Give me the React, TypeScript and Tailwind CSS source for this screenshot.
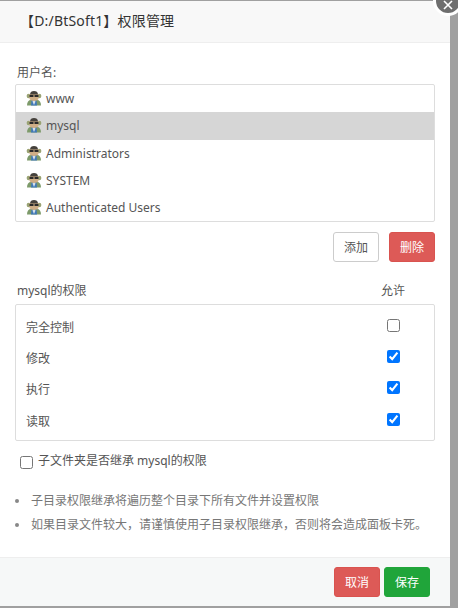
const FONT = "font-['Noto_Sans','Noto_Sans_CJK_SC',sans-serif]";

function UserIcon() {
  return (
    <svg width="16" height="16" viewBox="0 0 16 16" className="shrink-0">
      <path d="M1 15.500c0-3.500 1.500-5.500 4-5.500h6c2.500 0 4 2 4 5.500z" fill="#7d9a6a" />
      <path d="M5 15.500l.5-5.500h5l.5 5.500z" fill="#4079b8" />
      <path d="M8 10l-1.500 1.500L8 15l1.500-3.500z" fill="#d5dfea" />
      <circle cx="2.800" cy="6" r="2.200" fill="#9aa374" />
      <circle cx="13.200" cy="6" r="2.200" fill="#9aa374" />
      <path d="M3.500 4h9v4.500c0 1.500-2 2.500-4.500 2.500s-4.500-1-4.500-2.500z" fill="#cfae86" />
      <path d="M4 4.500C4 2 5.800 1 8 1s4 1 4 3.500z" fill="#45413c" />
      <rect x="3.500" y="5" width="4" height="2" fill="#2a2a2a" />
      <rect x="8.500" y="5" width="4" height="2" fill="#2a2a2a" />
    </svg>
  );
}

function UserRow({ name, className }: { name: string; className: string }) {
  return (
    <div className={`flex items-center gap-[4px] pl-[10px] text-[12px] text-[#555] ${className}`}>
      <UserIcon />
      <span className="pt-[2px]">{name}</span>
    </div>
  );
}

function Box({ checked }: { checked?: boolean }) {
  return (
    <input
      type="checkbox"
      readOnly
      checked={!!checked}
      className="m-0 h-[13px] w-[13px] accent-[#0075ff]"
    />
  );
}

function PermRow({ label, checked, className }: { label: string; checked?: boolean; className: string }) {
  return (
    <div className={`flex items-center justify-between pl-[10px] pr-[34px] text-[12px] text-[#555] ${className}`}>
      <span className="pt-[5px]">{label}</span>
      <Box checked={checked} />
    </div>
  );
}

export default function App() {
  return (
    <div className={`relative h-[608px] w-[458px] overflow-hidden bg-[#a0a0a0] pt-px ${FONT}`}>
      <div className="flex h-[605px] w-[450px] flex-col bg-white">
        <div className="flex h-[42px] shrink-0 items-center border-b border-[#eeeeee] bg-[#f8f8f8] pl-[20px] pb-[3px] text-[14px] tracking-[0.18px] text-[#333]">
          【D:/BtSoft1】权限管理
        </div>

        <div className="flex-1 px-[15px]">
          <div className="pl-[2px] pt-[21px] text-[12px] leading-[17px] text-[#555]">用户名:</div>
          <div className="mt-[3px] h-[138px] w-[420px] rounded-[2px] border border-[#dddddd] bg-white">
            <UserRow name="www" className="h-[27px] pb-[1px]" />
            <UserRow name="mysql" className="h-[28px] bg-[#d6d6d6] pb-[3px]" />
            <UserRow name="Administrators" className="h-[27px] pb-[2px]" />
            <UserRow name="SYSTEM" className="h-[27px] pb-[2px]" />
            <UserRow name="Authenticated Users" className="h-[27px] pb-[2px]" />
          </div>

          <div className="mt-[10px] flex w-[420px] justify-end gap-[10px]">
            <button className="h-[30px] w-[46px] rounded-[3px] border border-[#cccccc] bg-white pt-[2px] text-[12px] text-[#555]">添加</button>
            <button className="h-[30px] w-[46px] rounded-[3px] border border-[#d9534f] bg-[#dd5a57] pt-[2px] text-[12px] text-white">删除</button>
          </div>

          <div className="mt-[20px] flex h-[17px] w-[420px] items-center justify-between pl-[2px] pr-[30px] text-[12px] text-[#555]">
            <span>mysql的权限</span>
            <span>允许</span>
          </div>

          <div className="mt-[5px] h-[137px] w-[420px] rounded-[2px] border border-[#dddddd] pt-[14px]">
            <PermRow label="完全控制" className="h-[13px]" />
            <PermRow label="修改" checked className="mt-[18px] h-[13px]" />
            <PermRow label="执行" checked className="mt-[18px] h-[13px]" />
            <PermRow label="读取" checked className="mt-[19px] h-[13px]" />
          </div>

          <div className="mt-[11px] flex items-center gap-[5px] pl-[5px] text-[12px] text-[#555]">
            <span className="mt-[3px] flex"><Box /></span>
            <span className="leading-[17px]">子文件夹是否继承 mysql的权限</span>
          </div>

          <ul className="mt-[20px] w-[420px] text-[12px] leading-[24px] text-[#777]">
            <li className="flex items-center">
              <span className="mr-[12px] h-[4px] w-[4px] shrink-0 rounded-full bg-[#888]" />
              <span className="whitespace-nowrap">子目录权限继承将遍历整个目录下所有文件并设置权限</span>
            </li>
            <li className="flex items-center">
              <span className="mr-[12px] h-[4px] w-[4px] shrink-0 rounded-full bg-[#888]" />
              <span className="whitespace-nowrap">如果目录文件较大，请谨慎使用子目录权限继承，否则将会造成面板卡死。</span>
            </li>
          </ul>
        </div>

        <div className="flex h-[49px] shrink-0 items-center justify-end gap-[4px] border-t border-[#eeeeee] bg-[#f6f8f8] pr-[20px]">
          <button className="h-[30px] w-[46px] rounded-[3px] border border-[#d9534f] bg-[#dd5a57] pt-[1px] text-[12px] text-white">取消</button>
          <button className="h-[30px] w-[46px] rounded-[3px] border border-[#20a53a] bg-[#20a53a] pt-[1px] text-[12px] text-white">保存</button>
        </div>
      </div>

      <div className="absolute left-[433px] top-[-14px] flex h-[30px] w-[30px] items-center justify-center rounded-full border-[3px] border-white bg-[#6e6e6e]">
        <svg width="12" height="12" viewBox="0 0 12 12" className="mt-[7px]">
          <path d="M2 2l8 8M10 2l-8 8" stroke="#fff" strokeWidth="1.600" />
        </svg>
      </div>
    </div>
  );
}
